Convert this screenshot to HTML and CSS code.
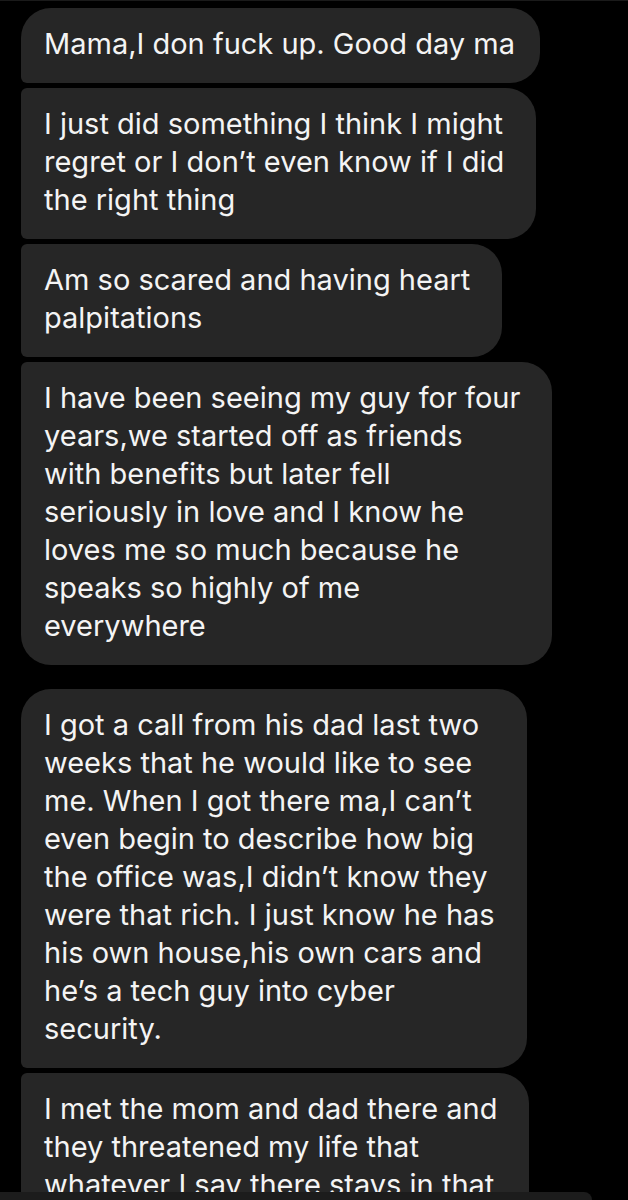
FILE: index.html
```html
<!DOCTYPE html>
<html lang="en">
<head>
<meta charset="UTF-8">
<meta name="viewport" content="width=device-width, initial-scale=1.0">
<title>Messages</title>
<link rel="stylesheet" href="styles.css">
</head>
<body>
<div class="thread">
  <div class="group">
    <div class="bubble first short">Mama,I don fuck up. Good day ma</div>
    <div class="bubble">I just did something I think I might<br>regret or I don’t even know if I did<br>the right thing</div>
    <div class="bubble">Am so scared and having heart<br>palpitations</div>
    <div class="bubble last">I have been seeing my guy for four<br>years,we started off as friends<br>with benefits but later fell<br>seriously in love and I know he<br>loves me so much because he<br>speaks so highly of me<br>everywhere</div>
  </div>
  <div class="group">
    <div class="bubble first">I got a call from his dad last two<br>weeks that he would like to see<br>me. When I got there ma,I can’t<br>even begin to describe how big<br>the office was,I didn’t know they<br>were that rich. I just know he has<br>his own house,his own cars and<br>he’s a tech guy into cyber<br>security.</div>
    <div class="bubble">I met the mom and dad there and<br>they threatened my life that<br>whatever I say there stays in that<br>office</div>
  </div>
</div>
<div class="input-bar"></div>
</body>
</html>
```

FILE: styles.css
```css
html, body {
  margin: 0;
  padding: 0;
}
body {
  background-color: #000;
  font-family: Inter, "Noto Sans", sans-serif;
  height: 1200px;
  overflow: hidden;
  border-top: 1px solid #1a1a1a;
  box-sizing: border-box;
}
.thread {
  display: flex;
  flex-direction: column;
  gap: 24px;
  padding: 7px 0 0 21px;
}
.group {
  display: flex;
  flex-direction: column;
  align-items: flex-start;
  gap: 5px;
}
.bubble {
  background-color: #262626;
  color: #f4f4f4;
  font-size: 29px;
  line-height: 38px;
  white-space: nowrap;
  padding: 17px 32px 20px 23px;
  border-radius: 6px 30px 30px 6px;
}
.bubble.short {
  padding-right: 25px;
}
.bubble.first {
  border-top-left-radius: 30px;
}
.bubble.last {
  border-bottom-left-radius: 30px;
}
.input-bar {
  position: fixed;
  left: 0;
  bottom: 0;
  width: 592px;
  height: 8px;
  background-color: #1c1c1c;
  border-top-right-radius: 10px;
}
```
